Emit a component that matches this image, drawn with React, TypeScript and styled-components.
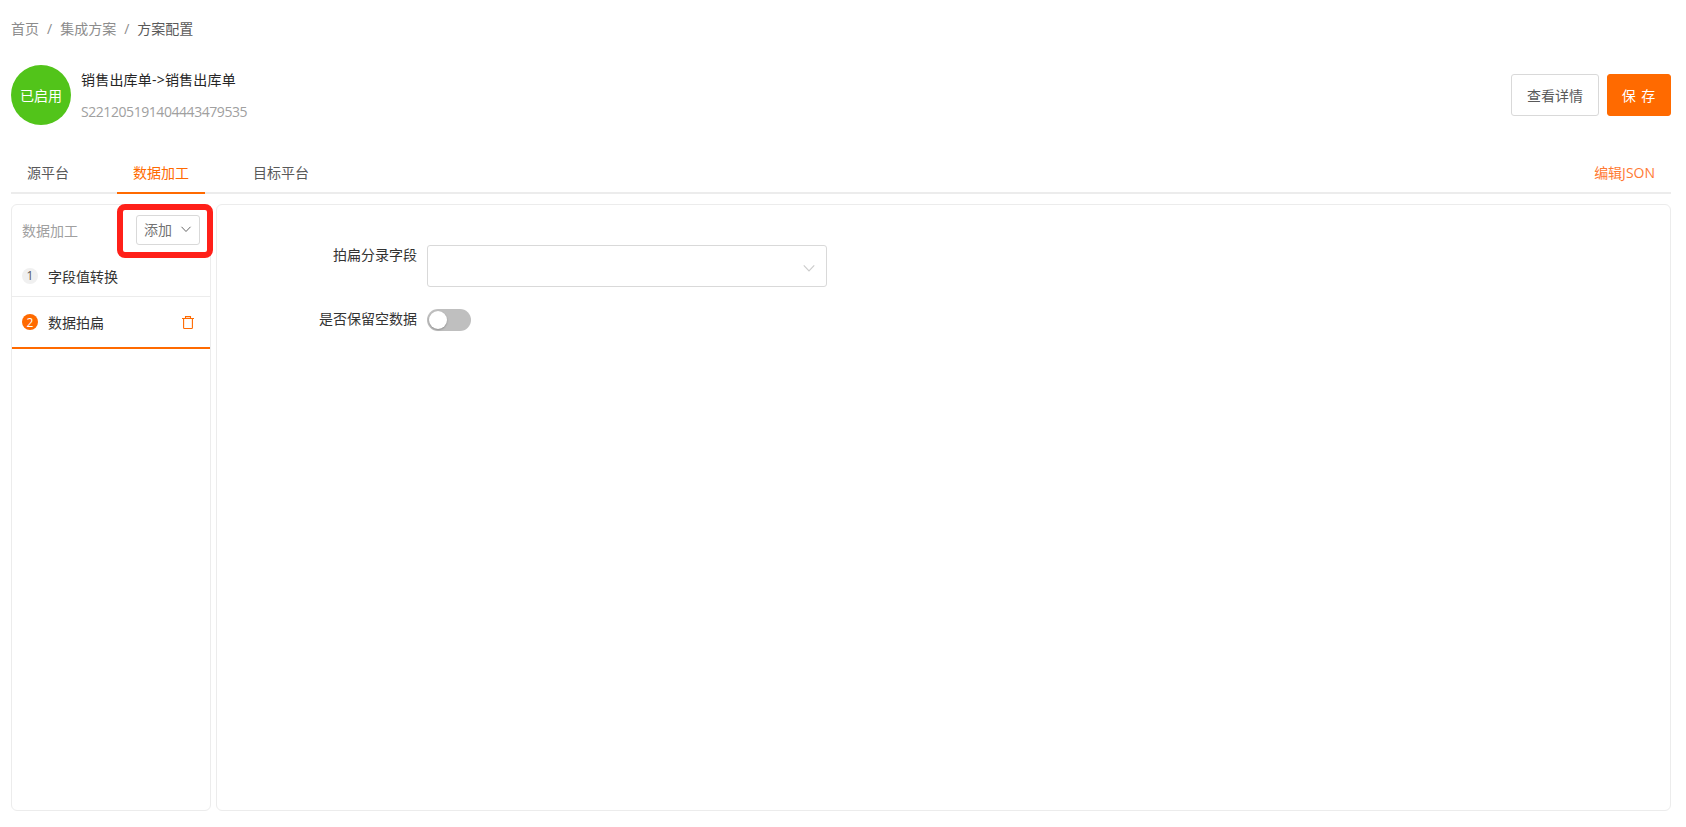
import React from 'react';
import styled, { createGlobalStyle } from 'styled-components';

const GlobalStyle = createGlobalStyle`
    html, body {
        margin: 0;
        padding: 0;
        background: #fff;
        font-family: "Open Sans", "Noto Sans CJK SC", sans-serif;
        font-size: 14px;
    }
`

const Page = styled.div`
    box-sizing: border-box;
    height: 827px;
    padding: 19px 15px 16px 11px;
    display: flex;
    flex-direction: column;
    color: #333;
`

const Breadcrumb = styled.div`
    display: flex;
    align-items: center;
    height: 20px;
    line-height: 20px;
    color: #8c8c8c;
`

const Crumb = styled.span<{ $current?: boolean }>`
    color: ${p => (p.$current ? '#595959' : '#8c8c8c')};
`

const Slash = styled.span`
    margin: 0 8px;
    color: #8c8c8c;
`

const Header = styled.div`
    display: flex;
    align-items: flex-start;
    justify-content: space-between;
    margin-top: 26px;
    height: 60px;
`

const Solution = styled.div`
    display: flex;
    gap: 10px;
`

const StatusBadge = styled.div`
    width: 60px;
    height: 60px;
    border-radius: 50%;
    background: #52c41a;
    color: #fff;
    display: flex;
    align-items: center;
    justify-content: center;
    font-size: 14px;
`

const SolutionInfo = styled.div`
    display: flex;
    flex-direction: column;
    padding-top: 5px;
    gap: 12px;
`

const SolutionName = styled.div`
    color: #262626;
    line-height: 20px;
    letter-spacing: 0.2px;
`

const SolutionId = styled.div`
    color: #a0a0a0;
    line-height: 20px;
    font-size: 14px;
    letter-spacing: -0.44px;
`

const Actions = styled.div`
    display: flex;
    gap: 8px;
    margin-top: 9px;
`

const Button = styled.button<{ $primary?: boolean }>`
    box-sizing: border-box;
    height: 42px;
    width: ${p => (p.$primary ? '64px' : '88px')};
    border-radius: 3px;
    border: 1px solid ${p => (p.$primary ? '#ff6a00' : '#d9d9d9')};
    background: ${p => (p.$primary ? '#ff6a00' : '#fff')};
    color: ${p => (p.$primary ? '#fff' : '#595959')};
    font-family: inherit;
    font-size: 14px;
    letter-spacing: ${p => (p.$primary ? '1px' : '0')};
    padding: 0;
`

const Tabs = styled.div`
    display: flex;
    align-items: stretch;
    margin-top: 23px;
    height: 46px;
    padding-top: 4px;
    box-sizing: border-box;
    border-bottom: 2px solid #ececec;
`

const Tab = styled.div<{ $active?: boolean }>`
    padding: 0 16px;
    margin-right: 32px;
    margin-bottom: -2px;
    display: flex;
    align-items: center;
    color: ${p => (p.$active ? '#ff6a00' : '#595959')};
    border-bottom: 2px solid ${p => (p.$active ? '#ff6a00' : 'transparent')};
`

const EditJson = styled.div`
    margin-left: auto;
    padding-right: 16px;
    display: flex;
    align-items: center;
    color: #ff7a33;
`

const Body = styled.div`
    flex: 1;
    margin-top: 10px;
    display: flex;
    gap: 5px;
    min-height: 0;
`

const Panel = styled.div`
    box-sizing: border-box;
    border: 1px solid #ececec;
    border-radius: 6px;
    background: #fff;
`

const Sidebar = styled(Panel)`
    position: relative;
    width: 200px;
    flex: none;
`

const SidebarHead = styled.div`
    display: flex;
    align-items: center;
    justify-content: space-between;
    height: 50px;
    padding: 0 10px;
    color: #a0a0a0;
`

const AddSelect = styled.div`
    box-sizing: border-box;
    width: 64px;
    height: 30px;
    border: 1px solid #d9d9d9;
    border-radius: 3px;
    display: flex;
    align-items: center;
    justify-content: space-between;
    padding: 0 7px 2px 7px;
    color: #737373;
`

const Highlight = styled.div`
    position: absolute;
    left: 105px;
    top: -1px;
    width: 96px;
    height: 54px;
    box-sizing: border-box;
    border: 6px solid #ff2019;
    border-radius: 8px;
`

const Step = styled.div<{ $active?: boolean }>`
    box-sizing: border-box;
    display: flex;
    align-items: center;
    gap: 10px;
    padding: 0 10px;
    color: #333;
    height: ${p => (p.$active ? '52px' : '42px')};
    border-bottom: ${p => (p.$active ? '2px solid #ff6a00' : '1px solid #ececec')};
`

const StepNumber = styled.span<{ $active?: boolean }>`
    width: 16px;
    height: 16px;
    border-radius: 50%;
    flex: none;
    display: flex;
    align-items: center;
    justify-content: center;
    font-size: 12px;
    background: ${p => (p.$active ? '#ff6a00' : '#f0f0f0')};
    color: ${p => (p.$active ? '#fff' : '#595959')};
`

const TrashIcon = styled.svg`
    margin-left: auto;
    margin-right: 6px;
    width: 12px;
    height: 13px;
    color: #ff6a00;
`

const Content = styled(Panel)`
    flex: 1;
    padding-top: 40px;
`

const FormRow = styled.div`
    display: flex;
    gap: 10px;
    margin-bottom: 22px;
`

const FormLabel = styled.div`
    width: 200px;
    text-align: right;
    color: #333;
    line-height: 20px;
`

const FieldSelect = styled.div`
    box-sizing: border-box;
    width: 400px;
    height: 42px;
    border: 1px solid #d9d9d9;
    border-radius: 3px;
    display: flex;
    align-items: center;
    justify-content: flex-end;
    padding: 3px 10px 0 0;
`

const Switch = styled.div`
    position: relative;
    width: 44px;
    height: 22px;
    border-radius: 11px;
    background: #bfbfbf;
`

const SwitchKnob = styled.span`
    position: absolute;
    left: 2px;
    top: 2px;
    width: 18px;
    height: 18px;
    border-radius: 50%;
    background: #fff;
    box-shadow: 0 1px 2px rgba(0, 0, 0, 0.25);
`

const Chevron = ({ size, color }: { size: number; color: string }) => (
    <svg width={size} height={size} viewBox="0 0 12 12" fill="none" stroke={color} strokeWidth="1">
        <path d="M1.5 3.8 6 8.5l4.5-4.7" />
    </svg>
)

const App = () => {
    return (
        <Page>
            <GlobalStyle />
            <Breadcrumb>
                <Crumb>首页</Crumb>
                <Slash>/</Slash>
                <Crumb>集成方案</Crumb>
                <Slash>/</Slash>
                <Crumb $current>方案配置</Crumb>
            </Breadcrumb>
            <Header>
                <Solution>
                    <StatusBadge>已启用</StatusBadge>
                    <SolutionInfo>
                        <SolutionName>销售出库单-&gt;销售出库单</SolutionName>
                        <SolutionId>S221205191404443479535</SolutionId>
                    </SolutionInfo>
                </Solution>
                <Actions>
                    <Button>查看详情</Button>
                    <Button $primary>保 存</Button>
                </Actions>
            </Header>
            <Tabs>
                <Tab>源平台</Tab>
                <Tab $active>数据加工</Tab>
                <Tab>目标平台</Tab>
                <EditJson>编辑JSON</EditJson>
            </Tabs>
            <Body>
                <Sidebar>
                    <SidebarHead>
                        <span>数据加工</span>
                        <AddSelect>
                            <span>添加</span>
                            <Chevron size={12} color="#666" />
                        </AddSelect>
                    </SidebarHead>
                    <Highlight />
                    <Step>
                        <StepNumber>1</StepNumber>
                        字段值转换
                    </Step>
                    <Step $active>
                        <StepNumber $active>2</StepNumber>
                        数据拍扁
                        <TrashIcon viewBox="0 0 12 13" fill="none" stroke="currentColor" strokeWidth="1.1">
                            <path d="M0 2.5h12M3.5 2.5V.6h5v1.9M1.6 2.5v9.2q0 .8.8.8h7.2q.8 0 .8-.8V2.5" />
                        </TrashIcon>
                    </Step>
                </Sidebar>
                <Content>
                    <FormRow>
                        <FormLabel>拍扁分录字段</FormLabel>
                        <FieldSelect>
                            <Chevron size={14} color="#ccc" />
                        </FieldSelect>
                    </FormRow>
                    <FormRow>
                        <FormLabel>是否保留空数据</FormLabel>
                        <Switch>
                            <SwitchKnob />
                        </Switch>
                    </FormRow>
                </Content>
            </Body>
        </Page>
    );
};

export default App;
